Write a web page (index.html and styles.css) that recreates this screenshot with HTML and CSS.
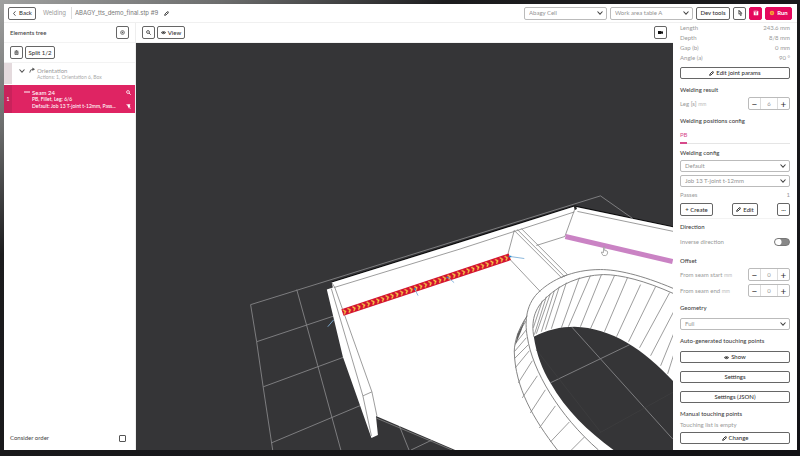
FILE: index.html
```
<!DOCTYPE html>
<html lang="en">
<head>
<meta charset="utf-8">
<title>Welding</title>
<link rel="stylesheet" href="styles.css">
</head>
<body>
<svg class="defs" aria-hidden="true">
  <symbol id="chevron" viewBox="0 0 8 8"><path d="M1.500 2.500 4 5.200 6.500 2.500" fill="none" stroke="currentColor" stroke-width="1.100"/></symbol>
  <symbol id="pencil" viewBox="0 0 8 8"><path d="M1 7 1.600 4.800 5.200 1.200a1 1 0 0 1 1.600 1.600L3.200 6.400zM4.400 2 6 3.600" fill="none" stroke="currentColor" stroke-width="1.500"/></symbol>
  <symbol id="search" viewBox="0 0 8 8"><circle cx="3.200" cy="3.200" r="2.300" fill="none" stroke="currentColor" stroke-width="1.200"/><path d="M4.900 4.900 7.500 7.500" stroke="currentColor" stroke-width="1.400"/></symbol>
  <symbol id="eye" viewBox="0 0 10 8"><path d="M0 4Q5-2.500 10 4 5 10.500 0 4z" fill="currentColor"/><circle cx="5" cy="4" r="2" fill="#fff"/><circle cx="5" cy="4" r="1.300" fill="currentColor"/></symbol>
</svg>
<div class="app">
  <header class="topbar">
    <button class="btn back"><svg class="ico" viewBox="0 0 8 8"><path d="M5.500 .5 2.500 4l3 3.500" fill="none" stroke="currentColor" stroke-width="1.300"/></svg>Back</button>
    <a class="crumb" href="#">Welding</a>
    <h1 class="title">ABAGY_tts_demo_final.stp #9</h1>
    <svg class="ico"><use href="#pencil"/></svg>
    <div class="actions">
      <div class="select"><select aria-label="Cell"><option>Abagy Cell</option></select><svg class="arrow"><use href="#chevron"/></svg></div>
      <div class="select"><select aria-label="Work area"><option>Work area table A</option></select><svg class="arrow"><use href="#chevron"/></svg></div>
      <button class="btn dev">Dev tools</button>
      <button class="btn square" aria-label="Pointer"><svg class="ico big" viewBox="0 0 8 8"><path d="M2.500 .5v5l1.200-.8 1 2.800 1.100-.4-1-2.700h1.600zM2.500 .8 6 4" fill="none" stroke="currentColor" stroke-width="1"/></svg></button>
      <button class="btn square pink" aria-label="Save"><svg class="ico big" viewBox="0 0 8 8"><path d="M1 1h5l1 1v5H1z" fill="#fff"/><path d="M2.500 1v1.800h2.500V1M2.800 5.200h2.400" fill="none" stroke="#e5085d" stroke-width="1"/></svg></button>
      <button class="btn pink run"><svg class="ico big" viewBox="0 0 8 8"><circle cx="4" cy="4" r="3" fill="#f5a13a"/><circle cx="4" cy="4" r="1.300" fill="#f26a35"/></svg>Run</button>
    </div>
  </header>

  <aside class="tree">
    <div class="bar spread"><h2>Elements tree</h2><button class="btn square" aria-label="Target"><svg class="ico" viewBox="0 0 8 8"><circle cx="4" cy="4" r="3" fill="none" stroke="currentColor" stroke-width="1"/><path d="M2.500 4h3M4 2.500v3" stroke="currentColor" stroke-width=".9"/></svg></button></div>
    <div class="bar"><button class="btn square" aria-label="Delete"><svg class="ico" viewBox="0 0 8 8"><path d="M.8 2h6.400M1.500 3.200h5v4h-5zM2.800 .8h2.400M3.200 3.500v3M4.800 3.500v3" fill="none" stroke="currentColor" stroke-width="1"/></svg></button><button class="btn split">Split 1/2</button></div>
    <ul class="nodes">
      <li class="node">
        <span class="gutter"></span>
        <svg class="ico fold"><use href="#chevron"/></svg>
        <svg class="ico big" viewBox="0 0 8 8"><path d="M1 7.500Q1 3 5.500 3" fill="none" stroke="currentColor" stroke-width="1.200"/><path d="M4.500 .6 8 3 4.500 5.400z" fill="currentColor"/></svg>
        <div class="text"><b>Orientation</b><small>Actions: 1, Orientation 6, Box</small></div>
      </li>
      <li class="node selected">
        <span class="gutter">1</span>
        <svg class="ico dash" viewBox="0 0 8 8"><path d="M0 4h8" stroke="currentColor" stroke-width="1.300"/></svg>
        <div class="text"><b>Seam 24</b><small>PB, Fillet, Leg: 6/6</small><small>Default: Job 13 T-joint t-12mm, Pass...</small></div>
        <div class="marks"><svg class="ico"><use href="#search"/></svg><svg class="ico" viewBox="0 0 8 8"><path d="M1.500 .5h5.500L6 3.200 7.500 5H5v3L4 5.500 3 4.500 3.300 3z" fill="currentColor"/><path d="M.5 .5l7 7.500" stroke="currentColor" stroke-width=".9"/></svg></div>
      </li>
    </ul>
    <label class="order">Consider order<input type="checkbox"></label>
  </aside>

  <main class="view">
    <div class="bar">
      <button class="btn square" aria-label="Search"><svg class="ico"><use href="#search"/></svg></button>
      <button class="btn viewbtn"><svg class="ico"><use href="#eye"/></svg>View</button>
      <button class="btn square camera" aria-label="Camera"><svg class="ico" viewBox="0 0 8 8"><path d="M0 1.500h5.500v1.300L8 1.800v4.400L5.500 5.200V6.500H0z" fill="#111"/></svg></button>
    </div>
    <svg class="scene" viewBox="136 44 537 406" preserveAspectRatio="xMidYMid slice" role="img" aria-label="Welded part">
      <defs>
        <pattern id="bead" width="5" height="7" patternUnits="userSpaceOnUse"><path d="M0 0h5v7H0z" fill="#d3122f"/><path d="M1.200 1.200 3.200 3.500 1.200 5.800" fill="none" stroke="#f8d84a" stroke-width="1.300"/></pattern>
      </defs>
      <path d="M332 282.500 574 206.500 579 207.500 673 227.500" fill="none" stroke="#0c0c0d" stroke-width="1"/>
      <g fill="none" stroke="#858587" stroke-width=".9">
        <path d="M251 305 600 196.500 632 219M251 305 257 342 263.500 387 273 450M297 290 318 366 341 450"/>
        <path d="M257 342 335 316M263.500 387 345 357M271.500 443 362 405M399 425 409 450M411 450 432 440"/>
      </g>
      <path d="M332 283 460 243 574 207 578 208 673 228V450H455L376 416 378 435 371.500 438 360 405 343 357 327 290 333 288z" fill="#fff"/>
      <g fill="none" stroke="#858585" stroke-width=".8">
        <path d="M334 288 460 249.500 574 212.500M577 212 673 232M575 208 564.500 237 536 246M332 283 335 288 372 392 377 416M331.500 289 363 396 371.500 436M363 396 372 392M376 418 452 450"/>
        <path d="M514 231 507 257 540 292M514 231 561 278M517 230 564 277M521 229 567 275M561 278 567 275"/>
      </g>
      <path d="M573 206l2.500-.5 1 4-2 1z" fill="#252525"/>
      <path d="M527 315C518 328 514 342 514 352 515 388 533 419 557 450H598C576 430 541 393 527 342z" fill="#fff"/>
      <path d="M527 316C518 329 514 342 514 352 515 388 533 419 557 450" fill="none" stroke="#777" stroke-width=".9"/>
      <path d="M673 289C640 275 616 270 600 270 571 270 551 281 540 291 526 303 524 321 527 337 532 371 559 416 598 450" fill="none" stroke="#777" stroke-width=".9"/>
      <path d="M673 294C644 281 620 275 603 275 578 276 560 285 547 297 533 309 531 323 533.500 337" fill="none" stroke="#777" stroke-width=".9"/>
      <g fill="none" stroke="#858585" stroke-width=".8">
        <path d="M542 301 533 328M546 297 534 335M550 294 536 334M554 291 541 332M559 287 545 330M566 283 551 329M579 278 561 328M590 276 568 327M601 275 580 327M614 276 590 329M627 278 604 332M640 285 616 337M655 287 628 342M669 293 639 348M673 312 650 356M673 334 660 366M673 355 667 374"/>
        <path d="M526 321 517 335M526 330 515 344M526 338 514 352M528 345 514 359M529 351 515 368M532 361 518 383M537 376 522 398M545 390 530 413M555 406 539 428M569 422 550 442M584 437 571 450"/>
      </g>
      <path d="M526 317 517 335 515 346 521 331z" fill="#606060"/>
      <path d="M533.500 337C547 330 560 327 574 327 611 328 644 350 673 382V450H613C587 431 566 411 550 383 542 370 536 354 533.500 337z" fill="#353537"/>
      <path d="M571.500 327.500 672 439M550 383 629 345" fill="none" stroke="#858587" stroke-width=".9"/>
      <path d="M536 350 600 432M599 433 673 392" fill="none" stroke="#3f3f41" stroke-width=".7"/>
      <path d="M565 237 672 262" stroke="#ca83c4" stroke-width="5"/>
      <g transform="translate(341.500 309.500) rotate(-18.400)"><rect width="176" height="7" fill="url(#bead)"/></g>
      <path d="M510 257 524 259M415 290 418 296M448 278 454 283M334 320 328 327" fill="none" stroke="#7fb0d8" stroke-width=".9"/>
      <path d="M508.500 257h2.500M414 289.500h2M446.500 278h1.500" stroke="#278bd0" stroke-width="1.500"/>
      <path d="M603 253v-5q0-1.500 1.200 0v3q3 0 3 1.500 0 3-2 3.500h-2.500q-1.500-1.500-1.700-3.500z" fill="#fff" stroke="#888" stroke-width=".7"/>
    </svg>
  </main>

  <aside class="panel">
    <section class="params">
      <dl><div><dt>Length</dt><dd>243.6 mm</dd></div><div><dt>Depth</dt><dd>8/8 mm</dd></div><div><dt>Gap (b)</dt><dd>0 mm</dd></div><div><dt>Angle (a)</dt><dd>90 °</dd></div></dl>
      <button class="btn"><svg class="ico"><use href="#pencil"/></svg>Edit joint params</button>
    </section>
    <section>
      <h2>Welding result</h2>
      <div class="field"><label for="leg">Leg [s] <small>mm</small></label><div class="stepper"><button aria-label="Less">−</button><input id="leg" value="6"><button aria-label="More">+</button></div></div>
    </section>
    <section>
      <h2>Welding positions config</h2>
      <div class="tabs"><button class="tab">PB</button></div>
    </section>
    <section class="config">
      <h2>Welding config</h2>
      <div class="select"><select aria-label="Welding config"><option>Default</option></select><svg class="arrow"><use href="#chevron"/></svg></div>
      <div class="select"><select aria-label="Job"><option>Job 13 T-joint t-12mm</option></select><svg class="arrow"><use href="#chevron"/></svg></div>
      <dl><div><dt>Passes</dt><dd>1</dd></div></dl>
      <div class="field"><button class="btn create">+ Create</button><button class="btn edit"><svg class="ico"><use href="#pencil"/></svg>Edit</button><button class="btn square">···</button></div>
    </section>
    <section class="direction">
      <h2>Direction</h2>
      <div class="field tall"><label for="inverse">Inverse direction</label><input class="toggle" id="inverse" type="checkbox"></div>
    </section>
    <section>
      <h2>Offset</h2>
      <div class="field"><label for="start">From seam start <small>mm</small></label><div class="stepper"><button aria-label="Less">−</button><input id="start" value="0"><button aria-label="More">+</button></div></div>
      <div class="field"><label for="end">From seam end <small>mm</small></label><div class="stepper"><button aria-label="Less">−</button><input id="end" value="0"><button aria-label="More">+</button></div></div>
    </section>
    <section class="loose">
      <h2>Geometry</h2>
      <div class="select"><select aria-label="Geometry"><option>Full</option></select><svg class="arrow"><use href="#chevron"/></svg></div>
    </section>
    <section class="loose">
      <h2>Auto-generated touching points</h2>
      <div class="stack">
        <button class="btn"><svg class="ico"><use href="#eye"/></svg>Show</button>
        <button class="btn">Settings</button>
        <button class="btn">Settings (JSON)</button>
      </div>
    </section>
    <section>
      <h2>Manual touching points</h2>
      <p>Touching list is empty</p>
      <button class="btn"><svg class="ico"><use href="#pencil"/></svg>Change</button>
    </section>
  </aside>
</div>
</body>
</html>
```
FILE: styles.css
```
* { box-sizing: border-box; margin: 0; padding: 0; }
body {
  min-height: 100vh;
  display: flex;
  padding: 4px 3px 6px 4px;
  background: linear-gradient(to bottom right, #a0a1a0 0, #6c6d6d 14%, #1c1c1e 28%, #121215 100%);
  font: 6px/8px Lato, "Open Sans", sans-serif;
  color: #444;
}
button, input, select { font: inherit; color: inherit; }
h1, h2 { font-size: inherit; font-weight: 500; }
ul { list-style: none; }
.defs { position: absolute; width: 0; height: 0; }
.app {
  flex: 1;
  display: grid;
  grid-template-columns: 132px minmax(0, 1fr) 124px;
  grid-template-rows: 19px minmax(0, 1fr);
  background: #fff;
}

.ico { width: 5px; height: 5px; flex: none; }
.big { width: 6px; height: 6px; }
.btn {
  display: flex;
  align-items: center;
  justify-content: center;
  gap: 2px;
  height: 13px;
  border: 1px solid #666;
  border-radius: 2px;
  background: #fff;
  color: #333;
  font-weight: 500;
  white-space: nowrap;
}
.square { width: 13px; }
.pink { border-color: #e5085d; background: #e5085d; color: #fff; font-weight: 700; }
.back { width: 28px; }
.dev { width: 34px; }
.run { width: 27px; }
.split { width: 30px; }
.viewbtn { width: 28px; }
.create { width: 33px; }
.edit { width: 26px; }

.select { position: relative; height: 12px; }
.select select {
  display: block;
  width: 100%;
  height: 100%;
  padding: 0 12px 0 4px;
  appearance: none;
  border: 1px solid #bbb;
  border-radius: 2px;
  background: #fff;
  color: #929292;
}
.arrow { position: absolute; top: 2px; right: 3px; width: 8px; height: 8px; color: #444; pointer-events: none; }

.topbar {
  grid-column: 1 / -1;
  display: flex;
  align-items: center;
  padding: 0 5px 0 4px;
  border-bottom: 1px solid #f0f0f0;
}
.crumb, .title { font-family: Inter, sans-serif; font-size: 6px; font-weight: 400; }
.crumb { margin-left: 7px; padding-right: 5px; border-right: 1px solid #ddd; color: #999; line-height: 12px; text-decoration: none; }
.title { margin: 0 6px 0 3px; color: #777; }
.actions { display: flex; gap: 3px; margin-left: auto; }
.actions .select { width: 83px; height: 13px; }

.bar { display: flex; align-items: center; gap: 2px; height: 20px; padding: 0 6px; border-bottom: 1px solid #f3f3f3; }
.spread { justify-content: space-between; }
.tree { display: flex; flex-direction: column; min-height: 0; border-right: 1px solid #eee; }
.node { display: flex; min-height: 21px; margin-bottom: 1px; color: #555; }
.node .ico { margin: 4px 2px 0 0; }
.node .fold { width: 8px; height: 8px; margin: 4px 3px 0 6px; }
.gutter { width: 8px; display: grid; place-items: center; background: #e4dadd; font-size: 5px; }
.text { display: flex; flex-direction: column; padding-top: 4px; line-height: 7px; white-space: nowrap; }
.text b { color: #999; font-size: 6px; font-weight: 400; }
.text small { color: #aaa; font-size: 5px; }
.selected { min-height: 28px; background: #df2463; color: #fff; }
.selected .text b, .selected .text small { color: #fff; font-weight: 500; }
.selected .gutter { background: #c9225b; }
.selected .dash { width: 6px; height: 6px; margin: 4px 2px 0 12px; }
.marks { display: flex; flex-direction: column; justify-content: space-between; margin-left: auto; padding: 0 4px 4px 0; }
.marks .ico { margin: 5px 0 0; }
.order { display: flex; align-items: center; justify-content: space-between; margin-top: auto; padding: 0 9px 8px 6px; }
.order input { width: 7px; height: 7px; appearance: none; border: 1px solid #555; border-radius: 1px; }

.view { display: flex; flex-direction: column; min-width: 0; min-height: 0; background: #353537; }
.view .bar { flex: none; background: #fff; }
.camera { margin-left: auto; }
.scene { display: block; flex: 1; width: 100%; min-height: 0; }

.panel { display: flex; flex-direction: column; padding: 0 7px; color: #999; }
.panel section { display: flex; flex-direction: column; gap: 3px; padding-top: 7px; }
.panel h2 { color: #444; line-height: 8px; white-space: nowrap; }
.panel .params { gap: 4px; padding-top: 0; }
.panel .loose { gap: 6px; }
.panel .config { padding-top: 5px; padding-bottom: 2px; border-bottom: 1px solid #f3f3f3; }
.panel .direction { padding-top: 4px; }
.panel section > .btn, .stack .btn { height: 12px; }
.stack { display: grid; gap: 8px; }
dl div { display: flex; justify-content: space-between; line-height: 10px; }
.field { display: flex; align-items: center; justify-content: space-between; height: 13px; }
.tall { height: 16px; }
.field small { color: #bbb; font-size: 5px; }
.stepper { display: flex; width: 42px; height: 13px; border: 1px solid #bbb; border-radius: 2px; }
.stepper button { width: 11px; border: 0; background: none; color: #333; font-size: 10px; line-height: 10px; }
.stepper input { flex: 1; width: 0; border: solid #ddd; border-width: 0 1px; text-align: center; }
.tabs { height: 16px; border-bottom: 1px solid #e5e5e5; }
.tab { height: 16px; border: 0; border-bottom: 2px solid #d74a8b; background: none; color: #d74a8b; font-size: 6px; }
.toggle { width: 16px; height: 8px; appearance: none; border: 1px solid #777; border-radius: 4px; background: radial-gradient(circle at 3px 3px, #fff 3px, #888 4px); }
.panel p { line-height: 8px; }
```
